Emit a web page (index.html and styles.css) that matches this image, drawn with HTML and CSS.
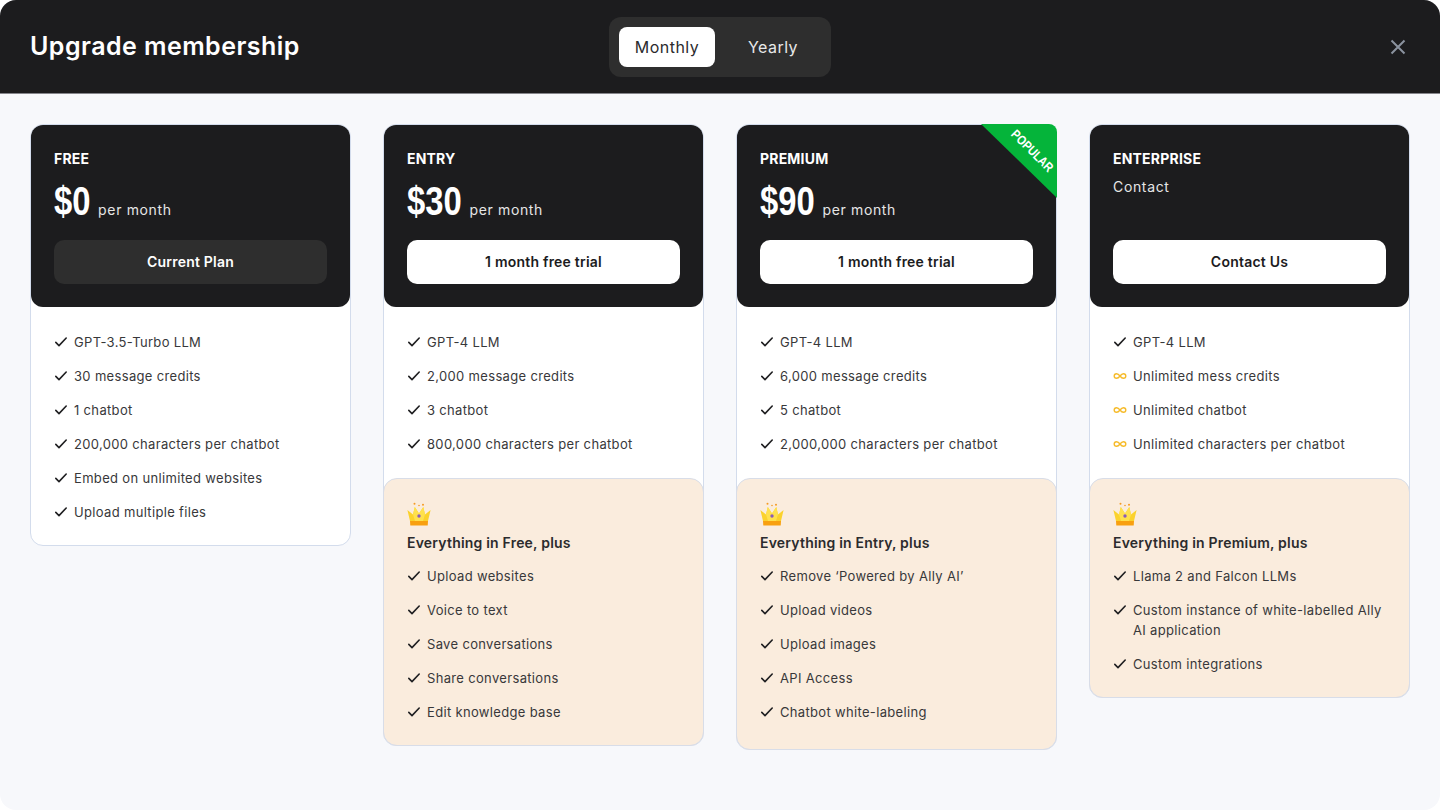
FILE: index.html
```html
<!DOCTYPE html>
<html lang="en">
<head>
<meta charset="utf-8">
<title>Upgrade membership</title>
<link rel="stylesheet" href="styles.css">
</head>
<body>
<svg class="sprites" width="0" height="0" aria-hidden="true">
  <symbol id="check" viewBox="0 0 14 14"><path d="M1.800 7.400 5 10.600l7.200-7.600" fill="none" stroke="#1f1f21" stroke-width="1.600" stroke-linecap="round" stroke-linejoin="round"/></symbol>
  <symbol id="inf" viewBox="0 0 14 14"><path d="M7 7C5.800 5.400 4.900 4.700 3.600 4.700 2.200 4.700 1.200 5.700 1.200 7s1 2.300 2.400 2.300C4.900 9.300 5.800 8.600 7 7c1.200-1.600 2.100-2.300 3.400-2.300 1.400 0 2.400 1 2.400 2.300s-1 2.300-2.400 2.300C9.100 9.300 8.200 8.600 7 7Z" fill="none" stroke="#f6bb2a" stroke-width="1.400"/></symbol>
  <symbol id="crown" viewBox="0 0 24 24">
    <circle cx="7.500" cy="1.800" r="1" fill="#f59a23"/><circle cx="16" cy="2.800" r="1" fill="#f59a23"/><circle cx="12" cy="3.500" r=".8" fill="#f59a23"/>
    <path d="M3 19 .4 8 6 12.500 7.800 5 12 11.500 16.300 5 18 12.500 23.600 8 21 19Z" fill="#fbd22c"/>
    <path d="M12 11.500 7.800 5 6 12.500 8 19h8l2-6.500L16.300 5Z" fill="#ffe14d"/>
    <path d="M3 19h18l-.3 4.500H3.300Z" fill="#f8a010"/>
    <circle cx="12" cy="14" r="1.700" fill="#8a5cb8"/>
  </symbol>
</svg>
<main class="modal">
  <header class="topbar">
    <h1 class="title">Upgrade membership</h1>
    <div class="toggle">
      <button class="toggle-btn is-active">Monthly</button>
      <button class="toggle-btn">Yearly</button>
    </div>
    <button class="close" aria-label="Close">
      <svg width="16" height="16" viewBox="0 0 16 16"><path d="M1.500 1.500l13 13M14.500 1.500l-13 13" stroke="#8b939f" stroke-width="2" fill="none"/></svg>
    </button>
  </header>
  <section class="plans">
    <article class="card card-free">
      <div class="card-head">
        <h2 class="plan-name">FREE</h2>
        <p class="price"><span class="amount amount-short">$0</span><span class="per">per month</span></p>
        <button class="cta cta-current">Current Plan</button>
      </div>
      <ul class="features">
        <li><svg class="ico"><use href="#check"/></svg>GPT-3.5-Turbo LLM</li>
        <li><svg class="ico"><use href="#check"/></svg>30 message credits</li>
        <li><svg class="ico"><use href="#check"/></svg>1 chatbot</li>
        <li><svg class="ico"><use href="#check"/></svg>200,000 characters per chatbot</li>
        <li><svg class="ico"><use href="#check"/></svg>Embed on unlimited websites</li>
        <li><svg class="ico"><use href="#check"/></svg>Upload multiple files</li>
      </ul>
    </article>

    <article class="card">
      <div class="card-head">
        <h2 class="plan-name">ENTRY</h2>
        <p class="price"><span class="amount amount-long">$30</span><span class="per">per month</span></p>
        <button class="cta">1 month free trial</button>
      </div>
      <ul class="features">
        <li><svg class="ico"><use href="#check"/></svg>GPT-4 LLM</li>
        <li><svg class="ico"><use href="#check"/></svg>2,000 message credits</li>
        <li><svg class="ico"><use href="#check"/></svg>3 chatbot</li>
        <li><svg class="ico"><use href="#check"/></svg>800,000 characters per chatbot</li>
      </ul>
      <div class="extras">
        <svg class="crown"><use href="#crown"/></svg>
        <h3 class="extras-title">Everything in Free, plus</h3>
        <ul class="extras-list">
          <li><svg class="ico"><use href="#check"/></svg>Upload websites</li>
          <li><svg class="ico"><use href="#check"/></svg>Voice to text</li>
          <li><svg class="ico"><use href="#check"/></svg>Save conversations</li>
          <li><svg class="ico"><use href="#check"/></svg>Share conversations</li>
          <li><svg class="ico"><use href="#check"/></svg>Edit knowledge base</li>
        </ul>
      </div>
    </article>

    <article class="card">
      <div class="card-head">
        <h2 class="plan-name">PREMIUM</h2>
        <p class="price"><span class="amount amount-long">$90</span><span class="per">per month</span></p>
        <button class="cta">1 month free trial</button>
      </div>
      <div class="ribbon"><span class="ribbon-text">POPULAR</span></div>
      <ul class="features">
        <li><svg class="ico"><use href="#check"/></svg>GPT-4 LLM</li>
        <li><svg class="ico"><use href="#check"/></svg>6,000 message credits</li>
        <li><svg class="ico"><use href="#check"/></svg>5 chatbot</li>
        <li><svg class="ico"><use href="#check"/></svg>2,000,000 characters per chatbot</li>
      </ul>
      <div class="extras extras-tall">
        <svg class="crown"><use href="#crown"/></svg>
        <h3 class="extras-title">Everything in Entry, plus</h3>
        <ul class="extras-list">
          <li><svg class="ico"><use href="#check"/></svg>Remove ‘Powered by Ally AI’</li>
          <li><svg class="ico"><use href="#check"/></svg>Upload videos</li>
          <li><svg class="ico"><use href="#check"/></svg>Upload images</li>
          <li><svg class="ico"><use href="#check"/></svg>API Access</li>
          <li><svg class="ico"><use href="#check"/></svg>Chatbot white-labeling</li>
        </ul>
      </div>
    </article>

    <article class="card">
      <div class="card-head">
        <h2 class="plan-name">ENTERPRISE</h2>
        <p class="contact">Contact</p>
        <button class="cta">Contact Us</button>
      </div>
      <ul class="features">
        <li><svg class="ico"><use href="#check"/></svg>GPT-4 LLM</li>
        <li><svg class="ico"><use href="#inf"/></svg>Unlimited mess credits</li>
        <li><svg class="ico"><use href="#inf"/></svg>Unlimited chatbot</li>
        <li><svg class="ico"><use href="#inf"/></svg>Unlimited characters per chatbot</li>
      </ul>
      <div class="extras">
        <svg class="crown"><use href="#crown"/></svg>
        <h3 class="extras-title">Everything in Premium, plus</h3>
        <ul class="extras-list">
          <li><svg class="ico"><use href="#check"/></svg>Llama 2 and Falcon LLMs</li>
          <li><svg class="ico"><use href="#check"/></svg>Custom instance of white-labelled Ally AI application</li>
          <li><svg class="ico"><use href="#check"/></svg>Custom integrations</li>
        </ul>
      </div>
    </article>
  </section>
</main>
</body>
</html>
```
FILE: styles.css
```css
* { box-sizing: border-box; }
html, body { margin: 0; height: 100%; background: #fff; }
body { font-family: Inter, "Liberation Sans", sans-serif; color: #2b2b2d; overflow: hidden; }
.sprites { position: absolute; }
h1, h2, h3, p, ul { margin: 0; padding: 0; }
ul { list-style: none; }
button { font-family: inherit; border: 0; cursor: pointer; }

.modal { height: 810px; background: #f7f8fb; border-radius: 16px; overflow: hidden; }

.topbar {
  height: 94px;
  padding: 0 30px;
  background: #1c1c1e;
  border-bottom: 1px solid #85858b;
  display: grid;
  grid-template-columns: 1fr auto 1fr;
  align-items: center;
}
.title { font-size: 25px; line-height: 32px; font-weight: 600; color: #fff; letter-spacing: .45px; margin-top: -1px; }
.toggle {
  display: flex;
  gap: 10px;
  padding: 10px;
  background: #2e2e2e;
  border-radius: 12px;
}
.toggle-btn {
  width: 96px;
  height: 40px;
  border-radius: 8px;
  background: transparent;
  color: #e8e8e8;
  font-size: 16px;
  letter-spacing: .45px;
}
.toggle-btn.is-active { background: #fff; color: #2b2b2d; }
.close {
  justify-self: end;
  width: 16px;
  height: 16px;
  padding: 0;
  margin-right: 4px;
  background: none;
  display: flex;
}

.plans {
  padding: 30px 30px 0;
  display: grid;
  grid-template-columns: repeat(4, 321px);
  justify-content: space-between;
  align-items: start;
}

.card {
  background: #fff;
  border: 1px solid #d3dcec;
  border-radius: 13px;
  position: relative;
}
.card-head {
  height: 182px;
  padding: 24px 23px 0;
  background: #1c1c1e;
  border-radius: 12px;
  color: #fff;
}
.plan-name { font-size: 14px; line-height: 20px; font-weight: 700; letter-spacing: .2px; }
.price { height: 50px; margin-top: 8px; display: flex; align-items: baseline; line-height: 48px; }
.amount {
  display: inline-block;
  font-family: "Liberation Sans", sans-serif;
  font-size: 41px;
  font-weight: 700;
  transform: scaleX(.8);
  transform-origin: 0 50%;
}
.amount-short { margin-right: -1.500px; }
.amount-long { margin-right: -6px; }
.per { font-size: 14px; letter-spacing: .65px; color: #e6e6e6; }
.contact { height: 50px; margin-top: 8px; font-size: 14px; line-height: 20px; letter-spacing: .65px; color: #e6e6e6; }
.cta {
  display: block;
  width: 273px;
  height: 44px;
  margin-top: 13px;
  padding: 0 0 2px;
  border-radius: 10px;
  background: #fff;
  color: #1c1c1e;
  font-size: 14px;
  font-weight: 600;
  letter-spacing: .22px;
}
.cta-current { background: #2e2e2e; color: #fff; }

.ribbon {
  position: absolute;
  top: -1px;
  right: -1px;
  width: 76px;
  height: 74px;
  background: #05b43a;
  border-top-right-radius: 8px;
  clip-path: polygon(0 0, 100% 0, 100% 100%);
}
.ribbon-text {
  position: absolute;
  left: 20px;
  top: 19px;
  width: 60px;
  text-align: center;
  transform: rotate(45deg) scaleX(.84);
  font-family: "Liberation Sans", sans-serif;
  font-size: 13px;
  line-height: 14px;
  font-weight: 700;
  color: #fff;
}

.features, .extras-list { display: flex; flex-direction: column; gap: 14px; }
.features { padding: 25px 23px 23px; }
.features li, .extras-list li {
  position: relative;
  padding-left: 20px;
  font-size: 13px;
  line-height: 20px;
  letter-spacing: .33px;
  color: #38383a;
}
.ico { position: absolute; left: 0; top: 3px; width: 14px; height: 14px; }

.extras {
  margin: 1px -1px -1px;
  padding: 23px 23px 23px;
  background: #faecdd;
  border: 1px solid #d8dde8;
  border-radius: 14px;
}
.extras-tall { padding-bottom: 27px; }
.crown { display: block; width: 24px; height: 24px; }
.extras-title { margin-top: 7px; font-size: 14px; line-height: 20px; font-weight: 600; letter-spacing: .2px; color: #2b2b2d; }
.extras-list { margin-top: 13px; }
```
